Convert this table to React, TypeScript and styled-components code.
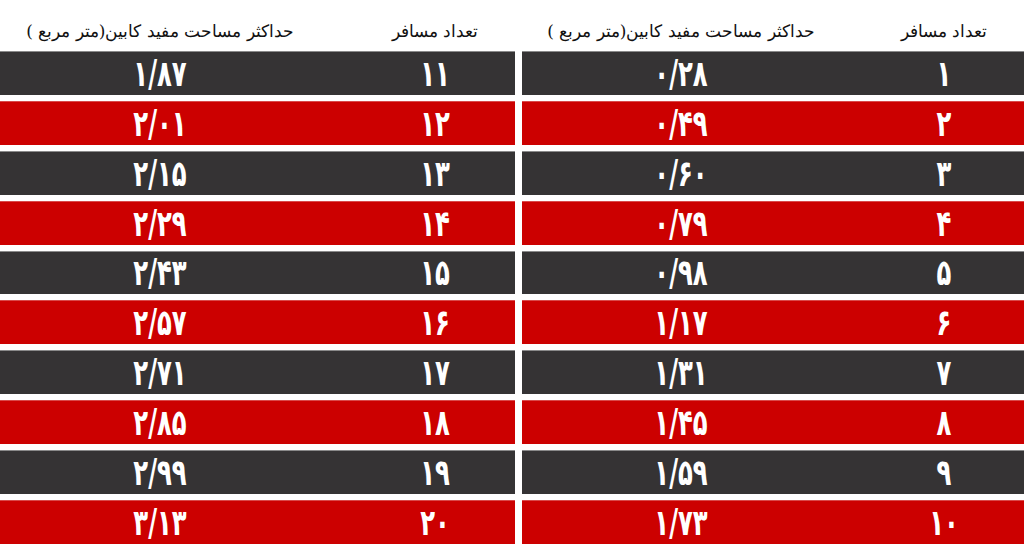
import styled, { createGlobalStyle } from 'styled-components';

const GlobalStyle = createGlobalStyle`
  html, body {
    margin: 0;
    padding: 0;
    background: #ffffff;
  }
`;

const Page = styled.div`
  direction: rtl;
  display: flex;
  flex-direction: row;
  gap: 7px;
  width: 1024px;
  height: 544px;
  overflow: hidden;
`;

const Table = styled.div<{ $width: number }>`
  width: ${(p) => p.$width}px;
  display: flex;
  flex-direction: column;
  gap: 6px;
`;

const HeaderRow = styled.div`
  display: grid;
  grid-template-columns: 160px 1fr;
  height: 45px;
  align-items: center;
  font-family: "DejaVu Serif", "Liberation Serif", serif;
  font-size: 17px;
  color: #111111;
`;

const HeaderCell = styled.div<{ $shift?: number }>`
  text-align: center;
  padding-inline-start: ${(p) => p.$shift || 0}px;
  padding-top: 18px;
`;

const Row = styled.div<{ $red: boolean }>`
  display: grid;
  grid-template-columns: 160px 1fr;
  height: 44px;
  align-items: center;
  background: ${(p) => (p.$red ? '#cc0000' : '#353334')};
  border-top: 1px solid ${(p) => (p.$red ? '#d94a4a' : '#8a8a8a')};
  box-sizing: border-box;
  color: #ffffff;
  font-family: "DejaVu Sans Condensed", "DejaVu Sans", sans-serif;
  font-weight: bold;
  font-size: 27px;
`;

const Cell = styled.div<{ $shift?: number }>`
  text-align: center;
  padding-inline-start: ${(p) => p.$shift || 0}px;
`;

const Num = styled.span`
  display: inline-block;
  transform: scaleY(1.35);
  letter-spacing: 1px;
`;

const toFa = (s: string) => s.replace(/[0-9]/g, (d) => '۰۱۲۳۴۵۶۷۸۹'[Number(d)]);

const right = ['0/28', '0/49', '0/60', '0/79', '0/98', '1/17', '1/31', '1/45', '1/59', '1/73'];
const left = ['1/87', '2/01', '2/15', '2/29', '2/43', '2/57', '2/71', '2/85', '2/99', '3/13'];

function Half({ start, values, width, shift }: { start: number; values: string[]; width: number; shift: number }) {
  return (
    <Table $width={width}>
      <HeaderRow>
        <HeaderCell>تعداد مسافر</HeaderCell>
        <HeaderCell $shift={shift}>حداکثر مساحت مفید کابین(متر مربع )</HeaderCell>
      </HeaderRow>
      {values.map((v, i) => (
        <Row key={v} $red={i % 2 === 1}>
          <Cell>
            <Num>{toFa(String(start + i))}</Num>
          </Cell>
          <Cell $shift={shift}>
            <Num>{toFa(v)}</Num>
          </Cell>
        </Row>
      ))}
    </Table>
  );
}

export default function App() {
  return (
    <>
      <GlobalStyle />
      <Page>
        <Half start={1} values={right} width={502} shift={24} />
        <Half start={11} values={left} width={515} shift={35} />
      </Page>
    </>
  );
}
